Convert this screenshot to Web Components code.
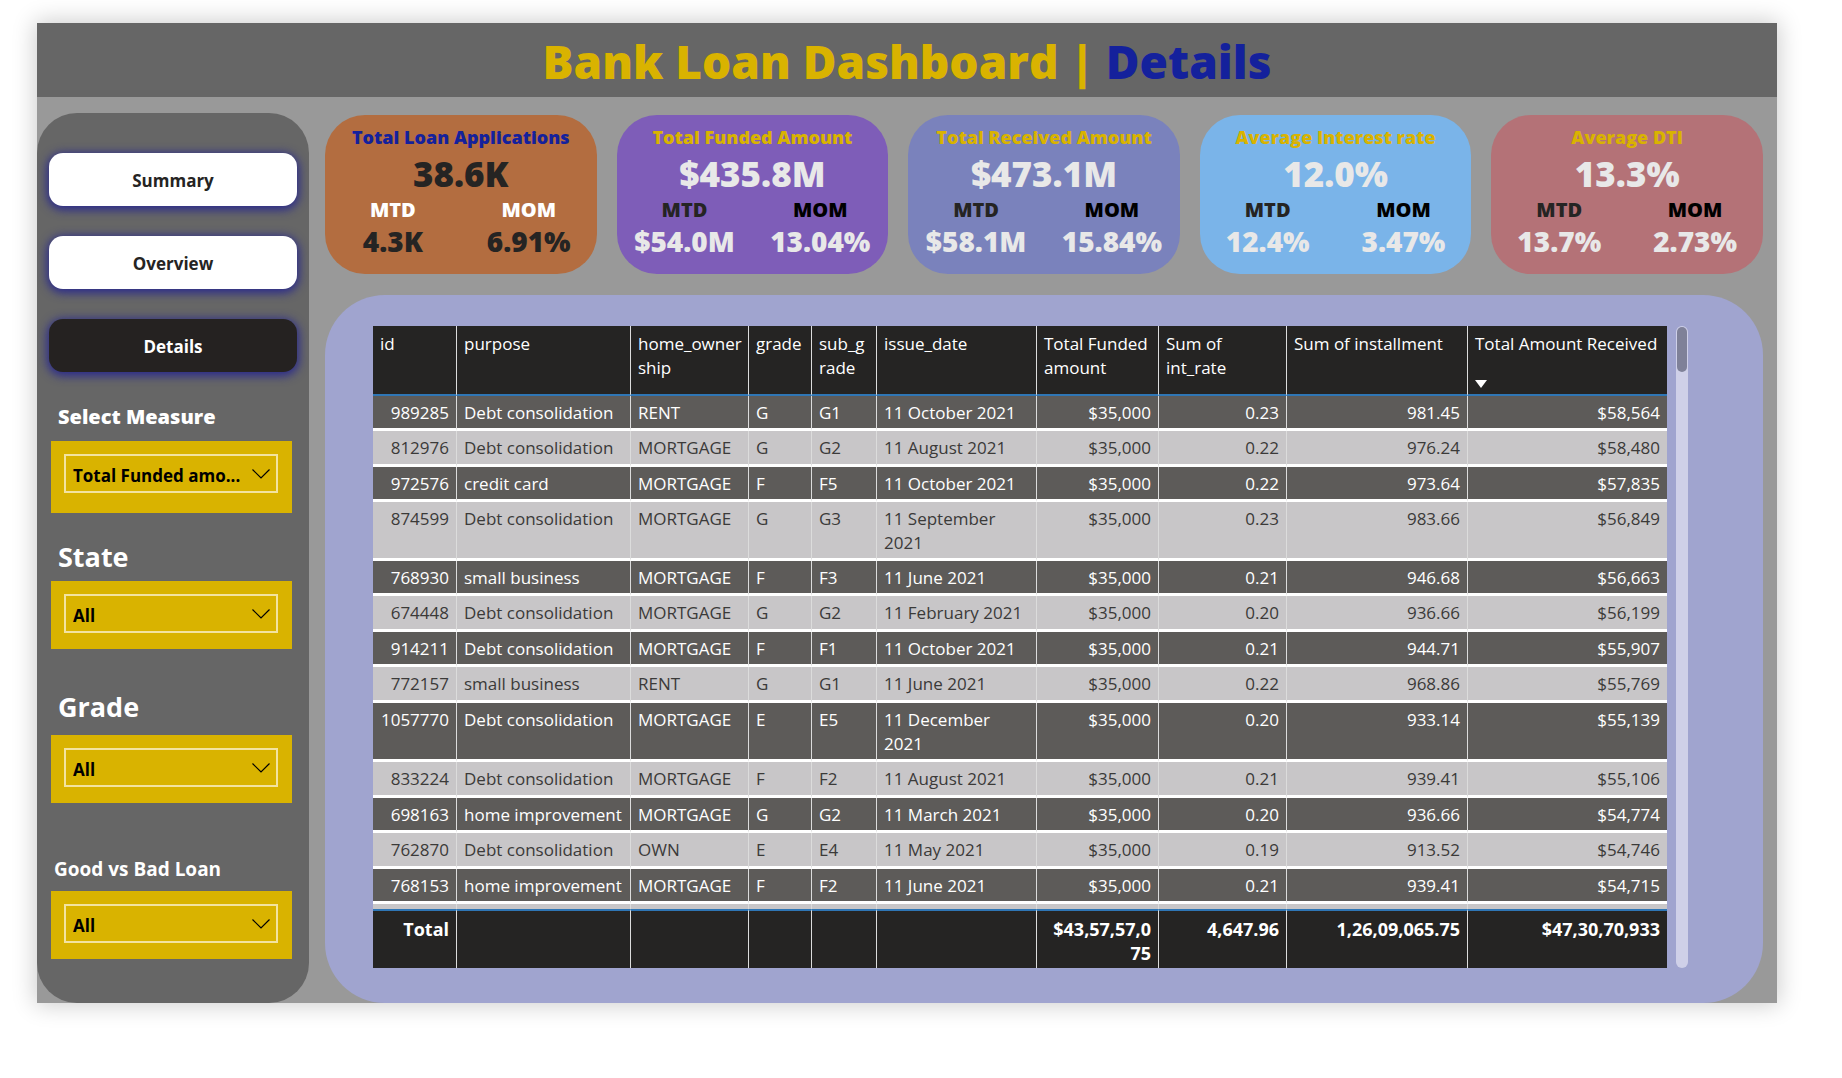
<!DOCTYPE html>
<html lang="en">
<head>
<meta charset="utf-8">
<title>Bank Loan Dashboard | Details</title>
<style>
html, body { height: 100%; }
body { margin: 0; background: #fff; font-family: "Open Sans", "Noto Sans", sans-serif; }
</style>
</head>
<body>
<loan-dashboard></loan-dashboard>
<script>
const define = (name, html, init) => {
  const template = document.createElement('template');
  template.innerHTML = html;
  customElements.define(name, class extends HTMLElement {
    constructor() {
      super();
      this.attachShadow({ mode: 'open' }).append(template.content.cloneNode(true));
    }
    connectedCallback() { if (init) init(this, this.shadowRoot); }
  });
};

define('nav-button', `
<style>
:host { display: block; }
button { display: block; width: 100%; height: 53px; padding: 2px 0 0; border: 0; border-radius: 14px; background: #fff; color: #252423;
  font: 700 17px/24px "Open Sans", sans-serif; box-shadow: 0 2px 10px 2px #2a2a8c; cursor: pointer; }
:host([active]) button { background: #252221; color: #fff; }
</style>
<button type="button"><slot></slot></button>`);

define('slicer-box', `
<style>
:host { display: block; }
label { display: flex; align-items: center; height: var(--label-height, 48px); padding-left: 7px; color: #fff; font-weight: 800; font-size: 20px; line-height: 28px; }
:host([size="large"]) label { font-weight: 700; font-size: 27px; line-height: 38px; }
:host([size="small"]) label { font-weight: 700; font-size: 19px; padding-left: 3px; }
.box { background: #d9b300; padding: 13px 14px 16px 13px; }
:host([roomy]) .box { padding-bottom: 20px; }
.field { display: grid; }
select, svg { grid-area: 1 / 1; }
select { appearance: none; width: 100%; min-width: 0; height: 39px; margin: 0; padding: 4px 30px 0 7px; border: 2px solid #f3e3a0; border-radius: 0;
  background: transparent; color: #000; font: 700 17px/24px "Open Sans", sans-serif; }
svg { justify-self: end; align-self: center; margin-right: 8px; pointer-events: none; }
</style>
<label for="field"></label>
<div class="box"><div class="field">
  <select id="field"></select>
  <svg width="18" height="10" viewBox="0 0 18 10" fill="none" stroke="#000" stroke-width="1.2"><path d="M0.5 0.5 L9 9 L17.5 0.5"/></svg>
</div></div>`, (host, root) => {
  root.querySelector('label').textContent = host.getAttribute('label');
  root.querySelector('select').replaceChildren(new Option(host.getAttribute('value')));
});

define('kpi-card', `
<style>
:host { display: block; box-sizing: border-box; padding: 8px 0 15px; border-radius: 40px; background: var(--card); text-align: center;
  font-weight: 800; color: var(--value, #e8e8e8); }
.title { font-size: 18px; line-height: 28px; color: var(--title, #d9b300); }
.total { font-size: 35px; line-height: 46px; }
.split { display: grid; grid-template-columns: 1fr 1fr; }
.name { font-size: 20px; line-height: 26px; color: var(--mom, #000); }
.name:first-child { color: var(--mtd, #252423); }
.part { font-size: 28px; line-height: 36px; }
</style>
<div class="title"><slot name="title"></slot></div>
<div class="total"><slot name="total"></slot></div>
<div class="split">
  <div class="name">MTD</div><div class="name">MOM</div>
  <div class="part"><slot name="mtd"></slot></div><div class="part"><slot name="mom"></slot></div>
</div>`);

define('loan-table', `
<style>
:host { display: flex; gap: 9px; min-height: 0; }
.view { flex: 1; min-width: 0; overflow: hidden; }
table { width: 100%; table-layout: fixed; border-collapse: separate; border-spacing: 0; font-size: 17px; line-height: 24px; }
th, td { box-sizing: border-box; vertical-align: top; text-align: left; font-weight: 400; padding: 6px 7px 0; border-right: 1px solid #dcdcdc; }
th:last-child, td:last-child { border-right: 0; }
td.num { text-align: right; overflow-wrap: anywhere; }
thead th { position: sticky; top: 0; height: 70px; padding-right: 6px; background: #252423; color: #fff; border-bottom: 2px solid #2f76b5; overflow-wrap: anywhere; }
tbody td { height: 35px; border-bottom: 3px solid #fff; padding: 5px 7px 3px; background: #5d5b59; color: #fff; }
tbody tr:nth-child(even) td { height: 36px; background: #c8c6c8; color: #3b3a39; }
tfoot td { position: sticky; bottom: 0; height: 59px; background: #252423; color: #fff; font-weight: 700; font-size: 18px; border-top: 2px solid #2f76b5; }
.sort { display: block; width: 0; height: 0; margin-top: 24px; border: 6px solid transparent; border-top: 8px solid #fff; border-bottom: 0; }
.track { width: 12px; border-radius: 6px; background: #cfd0e8; padding: 1px; box-sizing: border-box; }
.thumb { height: 45px; border-radius: 5px; background: #7f8198; }
</style>
<div class="view"><table>
<colgroup></colgroup><thead><tr></tr></thead><tbody></tbody><tfoot><tr></tr></tfoot>
</table></div>
<div class="track"><div class="thumb"></div></div>`, (host, root) => {
  const widths = [84, 174, 118, 63, 65, 160, 122, 128, 181, 199];
  const total = widths.reduce((a, b) => a + b);
  const numeric = [0, 6, 7, 8, 9];
  const heads = ['id', 'purpose', 'home_ownership', 'grade', 'sub_grade', 'issue_date', 'Total Funded amount', 'Sum of int_rate', 'Sum of installment', 'Total Amount Received'];
  const rows = [
    ['989285', 'Debt consolidation', 'RENT', 'G', 'G1', '11 October 2021', '$35,000', '0.23', '981.45', '$58,564'],
    ['812976', 'Debt consolidation', 'MORTGAGE', 'G', 'G2', '11 August 2021', '$35,000', '0.22', '976.24', '$58,480'],
    ['972576', 'credit card', 'MORTGAGE', 'F', 'F5', '11 October 2021', '$35,000', '0.22', '973.64', '$57,835'],
    ['874599', 'Debt consolidation', 'MORTGAGE', 'G', 'G3', '11 September 2021', '$35,000', '0.23', '983.66', '$56,849'],
    ['768930', 'small business', 'MORTGAGE', 'F', 'F3', '11 June 2021', '$35,000', '0.21', '946.68', '$56,663'],
    ['674448', 'Debt consolidation', 'MORTGAGE', 'G', 'G2', '11 February 2021', '$35,000', '0.20', '936.66', '$56,199'],
    ['914211', 'Debt consolidation', 'MORTGAGE', 'F', 'F1', '11 October 2021', '$35,000', '0.21', '944.71', '$55,907'],
    ['772157', 'small business', 'RENT', 'G', 'G1', '11 June 2021', '$35,000', '0.22', '968.86', '$55,769'],
    ['1057770', 'Debt consolidation', 'MORTGAGE', 'E', 'E5', '11 December 2021', '$35,000', '0.20', '933.14', '$55,139'],
    ['833224', 'Debt consolidation', 'MORTGAGE', 'F', 'F2', '11 August 2021', '$35,000', '0.21', '939.41', '$55,106'],
    ['698163', 'home improvement', 'MORTGAGE', 'G', 'G2', '11 March 2021', '$35,000', '0.20', '936.66', '$54,774'],
    ['762870', 'Debt consolidation', 'OWN', 'E', 'E4', '11 May 2021', '$35,000', '0.19', '913.52', '$54,746'],
    ['768153', 'home improvement', 'MORTGAGE', 'F', 'F2', '11 June 2021', '$35,000', '0.21', '939.41', '$54,715'],
    Array(10).fill('')
  ];
  const totals = ['Total', '', '', '', '', '', '$43,57,57,075', '4,647.96', '1,26,09,065.75', '$47,30,70,933'];
  const cells = row => row.map((v, i) => `<td${numeric.includes(i) ? ' class="num"' : ''}>${v}</td>`).join('');
  root.querySelector('colgroup').innerHTML = widths.map(w => `<col style="width:${w / total * 100}%">`).join('');
  root.querySelector('thead tr').innerHTML = heads.map((h, i) => `<th scope="col">${h}${i === 9 ? '<span class="sort"></span>' : ''}</th>`).join('');
  root.querySelector('tbody').innerHTML = rows.map(r => `<tr>${cells(r)}</tr>`).join('');
  root.querySelector('tfoot tr').innerHTML = cells(totals);
});

define('loan-dashboard', `
<style>
:host { display: flex; box-sizing: border-box; min-height: 100%; height: 100vh; padding: 23px 65px 75px 37px; }
.report { flex: 1; min-width: 0; display: flex; flex-direction: column; background: #999; box-shadow: 0 0 22px 2px rgba(0,0,0,.2); }
header { box-sizing: border-box; height: 74px; padding-top: 2px; background: #666; display: flex; align-items: center; justify-content: center; }
h1 { margin: 0; font: 800 46px/60px "Open Sans", sans-serif; color: #d9b300; white-space: pre; }
h1 span { color: #14219c; }
main { flex: 1; min-height: 0; display: flex; gap: 16px; padding: 16px 14px 0 0; }
aside { box-sizing: border-box; width: 272px; flex: none; background: #666; border-radius: 40px; padding: 40px 12px 0; }
nav { display: grid; gap: 30px; margin-bottom: 21px; }
.slicers { display: flex; flex-direction: column; padding: 0 5px 0 2px; }
.content { flex: 1; min-width: 0; display: flex; flex-direction: column; gap: 21px; padding-top: 2px; }
.cards { display: grid; grid-template-columns: repeat(5, 1fr); gap: 20px; }
.panel { flex: 1; min-height: 0; display: flex; background: #a0a4cf; border-radius: 60px; padding: 31px 75px 35px 48px; }
loan-table { flex: 1; min-width: 0; }
</style>
<div class="report">
  <header><h1>Bank Loan Dashboard | <span>Details</span></h1></header>
  <main>
    <aside>
      <nav><nav-button>Summary</nav-button><nav-button>Overview</nav-button><nav-button active>Details</nav-button></nav>
      <div class="slicers">
        <slicer-box label="Select Measure" value="Total Funded amo..." roomy></slicer-box>
        <slicer-box label="State" value="All" size="large" style="margin-top:20px"></slicer-box>
        <slicer-box label="Grade" value="All" size="large" style="margin-top:30px;--label-height:56px"></slicer-box>
        <slicer-box label="Good vs Bad Loan" value="All" size="small" style="margin-top:44px;--label-height:44px"></slicer-box>
      </div>
    </aside>
    <div class="content">
      <div class="cards">
        <kpi-card style="--card:#b36d40;--title:#14219c;--value:#252423;--mtd:#fff;--mom:#fff"><span slot="title">Total Loan Applications</span><span slot="total">38.6K</span><span slot="mtd">4.3K</span><span slot="mom">6.91%</span></kpi-card>
        <kpi-card style="--card:#7e5db8"><span slot="title">Total Funded Amount</span><span slot="total">$435.8M</span><span slot="mtd">$54.0M</span><span slot="mom">13.04%</span></kpi-card>
        <kpi-card style="--card:#7a82bc"><span slot="title">Total Received Amount</span><span slot="total">$473.1M</span><span slot="mtd">$58.1M</span><span slot="mom">15.84%</span></kpi-card>
        <kpi-card style="--card:#7ab4e9"><span slot="title">Average Interest rate</span><span slot="total">12.0%</span><span slot="mtd">12.4%</span><span slot="mom">3.47%</span></kpi-card>
        <kpi-card style="--card:#b47277"><span slot="title">Average DTI</span><span slot="total">13.3%</span><span slot="mtd">13.7%</span><span slot="mom">2.73%</span></kpi-card>
      </div>
      <div class="panel"><loan-table></loan-table></div>
    </div>
  </main>
</div>`);
</script>
</body>
</html>
